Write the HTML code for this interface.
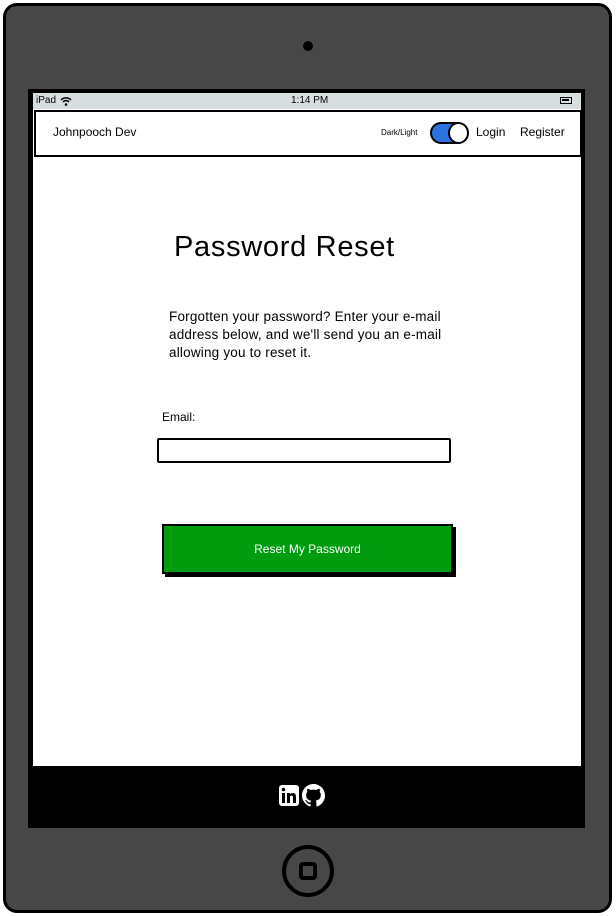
<!DOCTYPE html>
<html><head><meta charset="utf-8"><style>
*{margin:0;padding:0;box-sizing:border-box}
body{width:616px;height:916px;background:#fff;position:relative;overflow:hidden;font-family:"Liberation Sans",sans-serif;color:#000}
.dev{position:absolute;left:3px;top:3px;width:609px;height:910px;background:#474747;border:3px solid #000;border-radius:14px}
.cam{position:absolute;left:303px;top:41px;width:10px;height:10px;border-radius:50%;background:#000}
.scr{position:absolute;left:28px;top:89px;width:557px;height:739px;background:#000}
.white{position:absolute;left:33px;top:93px;width:548px;height:673px;background:#fff}
.status{position:absolute;left:33px;top:93px;width:548px;height:16px;background:#d8dde0;font-size:10px}
.nav{position:absolute;left:34px;top:110px;width:548px;height:47px;border:2px solid #000;background:#fff}
.a{position:absolute;white-space:nowrap}
.foot{position:absolute;left:34px;top:766px;width:551px;height:62px;background:#000}
.home{position:absolute;left:282px;top:845px;width:52px;height:52px;border:4px solid #000;border-radius:50%}
.home div{position:absolute;left:13px;top:13px;width:18px;height:18px;border:4px solid #000;border-radius:4px}
</style></head><body>
<div class="dev"></div>
<div class="cam"></div>
<div class="scr"></div>
<div class="white"></div>
<div class="status">
 <span class="a" style="left:3px;top:2px">iPad</span>
 <svg class="a" style="left:27px;top:3px" width="12" height="10" viewBox="0 0 12 10"><path d="M1 4a7 7 0 0 1 10 0M3 6a4 4 0 0 1 6 0" stroke="#000" stroke-width="1.5" fill="none"/><circle cx="6" cy="8.5" r="1.3"/></svg>
 <span class="a" style="left:258px;top:2px">1:14 PM</span>
 <div class="a" style="left:527px;top:4px;width:12px;height:7px;border:1.5px solid #000;padding:1px"><div style="background:#000;width:7px;height:2px"></div></div>
</div>
<div class="nav">
 <span class="a" style="left:17px;top:13px;font-size:12px">Johnpooch Dev</span>
 <span class="a" style="left:345px;top:16px;font-size:8px">Dark/Light</span>
 <div class="a" style="left:394px;top:10px;width:38px;height:22px;border:2px solid #000;border-radius:11px;background:#2a72e0"></div>
 <div class="a" style="left:412px;top:10px;width:21px;height:22px;border:2px solid #000;border-radius:50%;background:#fff"></div>
 <span class="a" style="left:440px;top:13px;font-size:12px">Login</span>
 <span class="a" style="left:484px;top:13px;font-size:12px">Register</span>
</div>
<div class="a" style="left:174px;top:231px;font-size:29px;letter-spacing:0.7px">Password Reset</div>
<div class="a" style="left:169px;top:308px;font-size:13.5px;line-height:18px;letter-spacing:0.2px">Forgotten your password? Enter your e-mail<br>address below, and we'll send you an e-mail<br>allowing you to reset it.</div>
<div class="a" style="left:162px;top:410px;font-size:12px">Email:</div>
<div class="a" style="left:157px;top:438px;width:294px;height:25px;border:2px solid #000;border-radius:2px;background:#fff"></div>
<div class="a" style="left:165px;top:527px;width:291px;height:50px;background:#000"></div>
<div class="a" style="left:162px;top:524px;width:291px;height:50px;background:#009c10;border:2px solid #000;color:#fff;font-size:12px;text-align:center;line-height:46px">Reset My Password</div>
<div class="foot"></div>
<svg class="a" style="left:279px;top:785px" width="20" height="21" viewBox="0 0 20 21"><rect x="0" y="0" width="20" height="21" rx="3" fill="#fff"/><rect x="3" y="8" width="3" height="10" fill="#000"/><circle cx="4.5" cy="4.5" r="1.8" fill="#000"/><path d="M8 8h3v1.5c1-2 6-2.5 6 2V18h-3v-6c0-2-3-2-3 0v6H8z" fill="#000"/></svg>
<svg class="a" style="left:302px;top:784px" width="23" height="23" viewBox="0 0 16 16"><path fill="#fff" d="M8 0C3.58 0 0 3.58 0 8c0 3.54 2.29 6.530 5.47 7.59.4.07.55-.17.55-.38v-1.33c-2.23.48-2.7-1.07-2.7-1.070-.36-.92-.89-1.17-.89-1.17-.73-.5.05-.49.05-.49.8.06 1.23.83 1.23.83.71 1.22 1.87.87 2.330.66.07-.52.28-.87.5-1.07-1.78-.2-3.64-.89-3.64-3.95 0-.87.31-1.59.82-2.15-.08-.2-.36-1.02.08-2.12 0 0 .67-.21 2.2.82A7.6 7.6 0 0 1 8 3.87c.68 0 1.36.09 2 .27 1.53-1.04 2.2-.82 2.2-.82.44 1.1.16 1.92.08 2.12.51.56.82 1.27.82 2.15 0 3.07-1.87 3.75-3.65 3.95.29.25.54.73.54 1.48v2.2c0 .21.15.46.55.38A8.01 8.01 0 0 0 16 8c0-4.42-3.58-8-8-8z"/></svg>
<div class="home"><div></div></div>
</body></html>
